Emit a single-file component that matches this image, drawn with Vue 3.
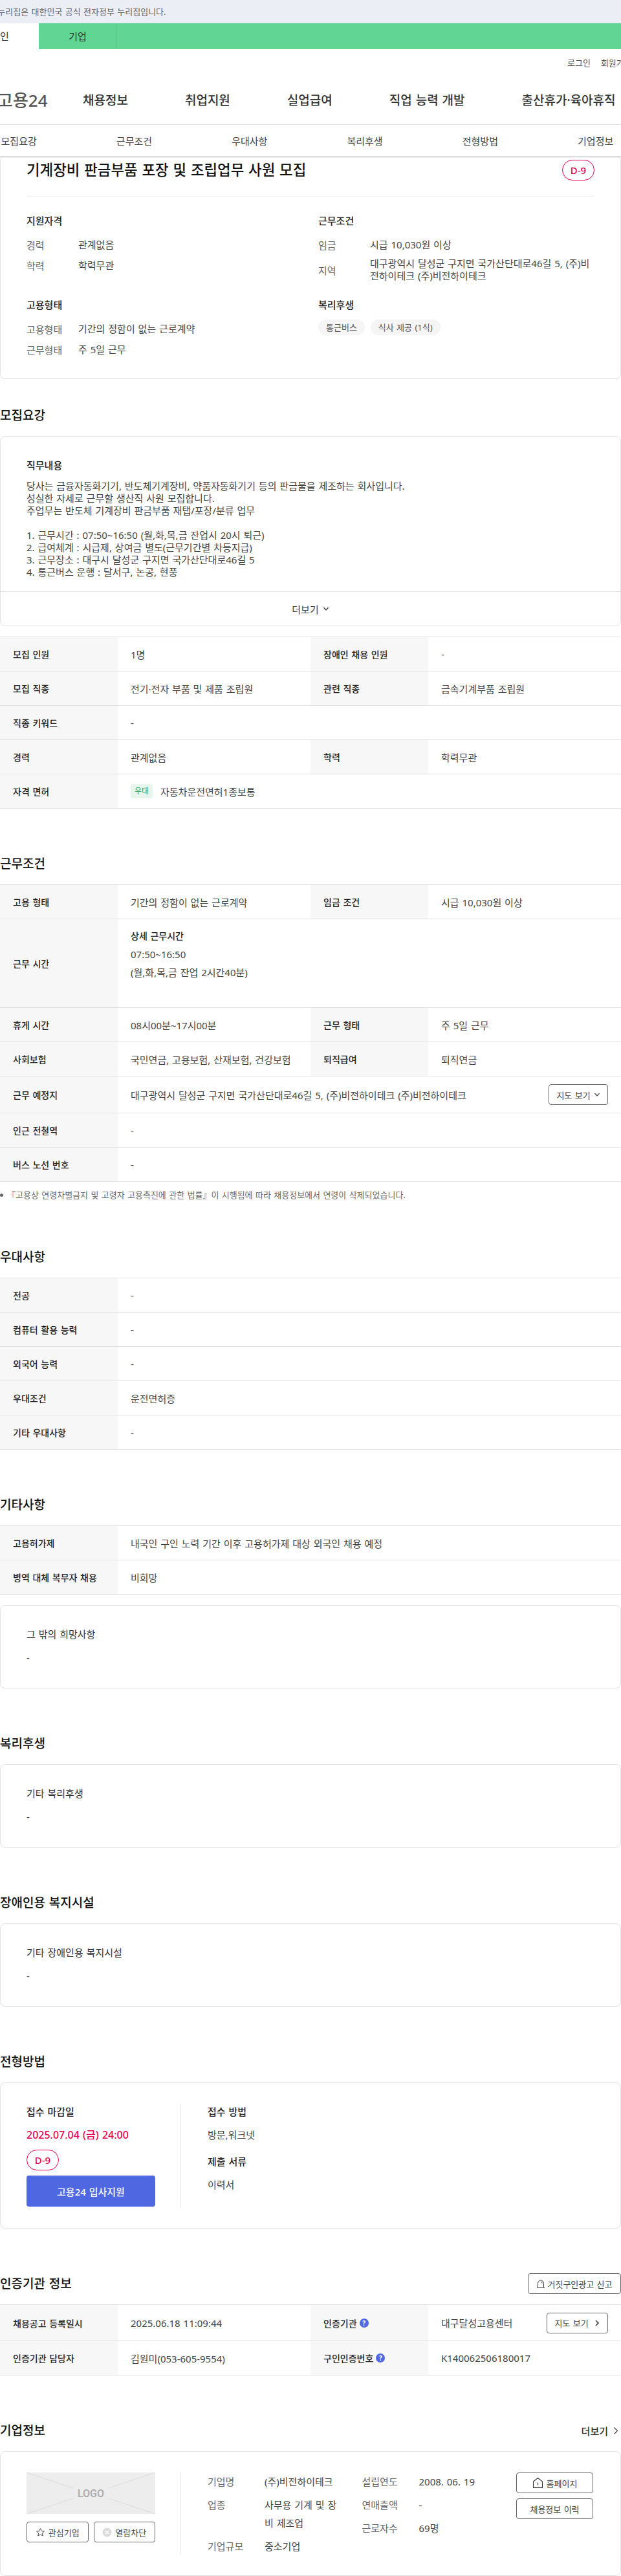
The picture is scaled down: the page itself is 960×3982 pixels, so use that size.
<script setup>
const recruit = [
  [['모집 인원', '1명'], ['장애인 채용 인원', '-']],
  [['모집 직종', '전기·전자 부품 및 제품 조립원'], ['관련 직종', '금속기계부품 조립원']],
  [['직종 키워드', '-']],
  [['경력', '관계없음'], ['학력', '학력무관']],
]
const prefer = [
  ['전공', '-'],
  ['컴퓨터 활용 능력', '-'],
  ['외국어 능력', '-'],
  ['우대조건', '운전면허증'],
  ['기타 우대사항', '-'],
]
const etc = [
  ['고용허가제', '내국인 구인 노력 기간 이후 고용허가제 대상 외국인 채용 예정'],
  ['병역 대체 복무자 채용', '비희망'],
]
const nav = ['채용정보', '취업지원', '실업급여', '직업 능력 개발', '출산휴가·육아휴직']
const anchors = ['모집요강', '근무조건', '우대사항', '복리후생', '전형방법', '기업정보']
</script>

<template>
  <div class="page">
    <div class="topbar">이 누리집은 대한민국 공식 전자정부 누리집입니다.</div>
    <div class="tabs">
      <div class="tab tab-on">개인</div>
      <div class="tab">기업</div>
    </div>
    <div class="util"><span>로그인</span><span>회원가입</span></div>
    <div class="gnb">
      <div class="logo">고용24</div>
      <span v-for="n in nav" :key="n">{{ n }}</span>
    </div>
    <div class="anchors">
      <span v-for="a in anchors" :key="a">{{ a }}</span>
    </div>

    <div class="card summary">
      <div class="sum-head">
        <h1>기계장비 판금부품 포장 및 조립업무 사원 모집</h1>
        <span class="dday">D-9</span>
      </div>
      <div class="sum-grid">
        <div>
          <h4 class="sum-h">지원자격</h4>
          <div class="sum-row"><span class="sum-k">경력</span><span class="sum-v">관계없음</span></div>
          <div class="sum-row"><span class="sum-k">학력</span><span class="sum-v">학력무관</span></div>
        </div>
        <div>
          <h4 class="sum-h">근무조건</h4>
          <div class="sum-row"><span class="sum-k">임금</span><span class="sum-v">시급 10,030원 이상</span></div>
          <div class="sum-row"><span class="sum-k">지역</span><span class="sum-v">대구광역시 달성군 구지면 국가산단대로46길 5, (주)비전하이테크 (주)비전하이테크</span></div>
        </div>
        <div>
          <h4 class="sum-h">고용형태</h4>
          <div class="sum-row"><span class="sum-k">고용형태</span><span class="sum-v">기간의 정함이 없는 근로계약</span></div>
          <div class="sum-row"><span class="sum-k">근무형태</span><span class="sum-v">주 5일 근무</span></div>
        </div>
        <div>
          <h4 class="sum-h chips-h">복리후생</h4>
          <div class="chips"><span>통근버스</span><span>식사 제공 (1식)</span></div>
        </div>
      </div>
    </div>

    <section class="first">
      <h2>모집요강</h2>
      <div class="card job">
        <div class="job-body">
          <h4>직무내용</h4>
          <p>당사는 금융자동화기기, 반도체기계장비, 약품자동화기기 등의 판금물을 제조하는 회사입니다.<br>성실한 자세로 근무할 생산직 사원 모집합니다.<br>주업무는 반도체 기계장비 판금부품 재탭/포장/분류 업무<br><br>1. 근무시간 : 07:50~16:50 (월,화,목,금 잔업시 20시 퇴근)<br>2. 급여체계 : 시급제, 상여금 별도(근무기간별 차등지급)<br>3. 근무장소 : 대구시 달성군 구지면 국가산단대로46길 5<br>4. 통근버스 운행 : 달서구, 논공, 현풍</p>
        </div>
        <div class="more">더보기
          <svg width="10" height="10" viewBox="0 0 10 10"><path d="M1.5 3.2 5 6.8l3.5-3.6" fill="none" stroke="#333" stroke-width="1.4"/></svg>
        </div>
      </div>
      <div class="tbl tbl-gap">
        <div v-for="(r, i) in recruit" :key="i" class="row">
          <template v-for="c in r" :key="c[0]">
            <div class="th">{{ c[0] }}</div>
            <div class="td" :class="{ wide: r.length === 1 }">{{ c[1] }}</div>
          </template>
        </div>
        <div class="row">
          <div class="th">자격 면허</div>
          <div class="td wide"><span class="tag">우대</span>자동차운전면허1종보통</div>
        </div>
      </div>
    </section>

    <section>
      <h2>근무조건</h2>
      <div class="tbl">
        <div class="row">
          <div class="th">고용 형태</div><div class="td">기간의 정함이 없는 근로계약</div>
          <div class="th">임금 조건</div><div class="td">시급 10,030원 이상</div>
        </div>
        <div class="row row-hours">
          <div class="th">근무 시간</div>
          <div class="td wide hours">
            <strong>상세 근무시간</strong>
            <span>07:50~16:50</span>
            <span>(월,화,목,금 잔업 2시간40분)</span>
          </div>
        </div>
        <div class="row">
          <div class="th">휴게 시간</div><div class="td">08시00분~17시00분</div>
          <div class="th">근무 형태</div><div class="td">주 5일 근무</div>
        </div>
        <div class="row">
          <div class="th">사회보험</div><div class="td">국민연금, 고용보험, 산재보험, 건강보험</div>
          <div class="th">퇴직급여</div><div class="td">퇴직연금</div>
        </div>
        <div class="row row-tall">
          <div class="th">근무 예정지</div>
          <div class="td wide between">
            <span>대구광역시 달성군 구지면 국가산단대로46길 5, (주)비전하이테크 (주)비전하이테크</span>
            <button class="btn map">지도 보기
              <svg width="10" height="10" viewBox="0 0 10 10"><path d="M1.5 3.2 5 6.8l3.5-3.6" fill="none" stroke="#333" stroke-width="1.2"/></svg>
            </button>
          </div>
        </div>
        <div class="row"><div class="th">인근 전철역</div><div class="td wide">-</div></div>
        <div class="row"><div class="th">버스 노선 번호</div><div class="td wide">-</div></div>
      </div>
      <p class="note"><i></i>『고용상 연령차별금지 및 고령자 고용촉진에 관한 법률』이 시행됨에 따라 채용정보에서 연령이 삭제되었습니다.</p>
    </section>

    <section class="after-note">
      <h2>우대사항</h2>
      <div class="tbl">
        <div v-for="r in prefer" :key="r[0]" class="row">
          <div class="th">{{ r[0] }}</div><div class="td wide">{{ r[1] }}</div>
        </div>
      </div>
    </section>

    <section>
      <h2>기타사항</h2>
      <div class="tbl">
        <div v-for="r in etc" :key="r[0]" class="row">
          <div class="th">{{ r[0] }}</div><div class="td wide">{{ r[1] }}</div>
        </div>
      </div>
      <div class="card simple tbl-gap">
        <h4>그 밖의 희망사항</h4>
        <p>-</p>
      </div>
    </section>

    <section>
      <h2>복리후생</h2>
      <div class="card simple">
        <h4>기타 복리후생</h4>
        <p>-</p>
      </div>
    </section>

    <section>
      <h2>장애인용 복지시설</h2>
      <div class="card simple">
        <h4>기타 장애인용 복지시설</h4>
        <p>-</p>
      </div>
    </section>

    <section>
      <h2>전형방법</h2>
      <div class="card apply">
        <div class="apply-left">
          <h4>접수 마감일</h4>
          <div class="deadline">2025.07.04 (금) 24:00</div>
          <span class="dday">D-9</span>
          <button class="apply-btn">고용24 입사지원</button>
        </div>
        <div class="apply-right">
          <h4>접수 방법</h4>
          <p>방문,워크넷</p>
          <h4 class="second">제출 서류</h4>
          <p>이력서</p>
        </div>
      </div>
    </section>

    <section>
      <div class="head-row">
        <h2>인증기관 정보</h2>
        <button class="btn report">
          <svg width="14" height="14" viewBox="0 0 14 14"><path d="M2.5 13V6.5a4.5 4.5 0 0 1 9 0V13M1 13h12M7 4.2a2.4 2.4 0 0 1 2.2 2.2" fill="none" stroke="#333" stroke-width="1"/></svg>
          거짓구인광고 신고
        </button>
      </div>
      <div class="tbl">
        <div class="row row-cert">
          <div class="th">채용공고 등록일시</div><div class="td">2025.06.18 11:09:44</div>
          <div class="th">인증기관<span class="help">?</span></div>
          <div class="td between">
            <span>대구달성고용센터</span>
            <button class="btn map2">지도 보기
              <svg width="10" height="12" viewBox="0 0 10 12"><path d="M3 2l4 4-4 4" fill="none" stroke="#333" stroke-width="1.6"/></svg>
            </button>
          </div>
        </div>
        <div class="row">
          <div class="th">인증기관 담당자</div><div class="td">김원미(053-605-9554)</div>
          <div class="th">구인인증번호<span class="help">?</span></div><div class="td">K140062506180017</div>
        </div>
      </div>
    </section>

    <section>
      <div class="head-row">
        <h2>기업정보</h2>
        <span class="more-link">더보기
          <svg width="8" height="13" viewBox="0 0 8 13"><path d="M1.5 1.5l5 5-5 5" fill="none" stroke="#444" stroke-width="1.2"/></svg>
        </span>
      </div>
      <div class="card company">
        <div class="co-left">
          <svg class="co-logo" width="199" height="64" viewBox="0 0 199 64">
            <rect width="199" height="64" fill="#ededed"/>
            <path d="M0 0 72 24M199 0 127 24M0 64 72 40M199 64 127 40" stroke="#dcdcdc" stroke-width="1"/>
            <text x="99.5" y="38" text-anchor="middle" class="logo-text">LOGO</text>
          </svg>
          <div class="co-btns">
            <button class="btn co-btn">
              <svg width="15" height="15" viewBox="0 0 15 15"><path d="M7.5 1.5 9.3 5.4l4.2.5-3.1 2.9.8 4.2-3.7-2.1L3.8 13l.8-4.2L1.5 5.9l4.2-.5z" fill="none" stroke="#444" stroke-width="1"/></svg>
              관심기업
            </button>
            <button class="btn co-btn">
              <svg width="15" height="15" viewBox="0 0 15 15"><circle cx="7.5" cy="7.5" r="7" fill="#dcdcdc"/><path d="M5 5l5 5M10 5l-5 5" stroke="#fff" stroke-width="1.3"/></svg>
              열람차단
            </button>
          </div>
        </div>
        <div class="co-info">
          <dl class="co-col">
            <div><dt>기업명</dt><dd>(주)비전하이테크</dd></div>
            <div><dt>업종</dt><dd>사무용 기계 및 장비 제조업</dd></div>
            <div><dt>기업규모</dt><dd>중소기업</dd></div>
          </dl>
          <dl class="co-col">
            <div><dt>설립연도</dt><dd>2008. 06. 19</dd></div>
            <div><dt>연매출액</dt><dd>-</dd></div>
            <div><dt>근로자수</dt><dd>69명</dd></div>
          </dl>
          <div class="co-actions">
            <button class="btn">
              <svg width="17" height="18" viewBox="0 0 17 18"><path d="M1.5 16.5V7l7-5.5 7 5.5v9.5z" fill="none" stroke="#333" stroke-width="1.1" stroke-linejoin="round"/><path d="M8.5 8.5v4" stroke="#333" stroke-width="1.3"/></svg>
              홈페이지
            </button>
            <button class="btn">채용정보 이력</button>
          </div>
        </div>
      </div>
    </section>
  </div>
</template>

<style scoped>
.page {
  width: 960px;
  height: 3982px;
  overflow: hidden;
  background: #fff;
  color: #444;
  font-family: "Noto Sans", "Noto Sans CJK KR", sans-serif;
  font-size: 15px;
  word-spacing: 1px;
}
h1, h2, h4, p, dl, dd { margin: 0; }
button { font-family: inherit; word-spacing: inherit; cursor: pointer; }

.topbar {
  height: 36px;
  line-height: 36px;
  margin-left: -20px;
  background: #ebeff5;
  font-size: 13px;
  color: #666;
  white-space: nowrap;
}
.tabs {
  display: flex;
  height: 40px;
  margin-left: -60px;
  background: #61d593;
}
.tab {
  width: 120px;
  line-height: 40px;
  text-align: center;
  font-size: 15px;
  color: #333;
  border-right: 1px solid rgba(0, 0, 0, 0.06);
}
.tab-on { background: #fff; border-right: 0; }
.util {
  display: flex;
  gap: 16px;
  height: 40px;
  align-items: center;
  padding-left: 877px;
  font-size: 13px;
  color: #555;
  white-space: nowrap;
}
.gnb {
  display: flex;
  align-items: center;
  gap: 88px;
  height: 76px;
  margin-left: -4px;
  border-bottom: 1px solid #eee;
  font-size: 19px;
  font-weight: 500;
  color: #333;
  white-space: nowrap;
}
.logo {
  width: 44px;
  font-size: 26px;
  color: #555;
}
.anchors {
  position: relative;
  z-index: 1;
  display: flex;
  height: 48px;
  align-items: center;
  margin-left: -60px;
  width: 1080px;
  background: #fff;
  box-shadow: 0 1px 3px rgba(0, 0, 0, 0.25);
  font-size: 15px;
  color: #444;
}
.anchors span { width: 178.3px; text-align: center; flex: none; }

.card {
  border: 1px solid #e2e2e2;
  border-radius: 8px;
  background: #fff;
}
.summary {
  height: 345px;
  padding: 0 40px;
  box-sizing: border-box;
  border-top: 0;
}
.sum-head {
  display: flex;
  justify-content: space-between;
  align-items: flex-start;
  padding: 6px 0 24px;
  border-bottom: 1px solid #eee;
}
h1 {
  font-size: 22.4px;
  line-height: 32px;
  font-weight: 500;
  color: #111;
}
.dday {
  display: block;
  width: 50px;
  height: 32px;
  line-height: 30px;
  box-sizing: border-box;
  border: 1px solid #e5004f;
  border-radius: 16px;
  text-align: center;
  font-size: 15px;
  font-weight: 500;
  color: #e5004f;
}
.sum-grid {
  display: grid;
  grid-template-columns: 451px 1fr;
  grid-template-rows: 107px auto;
  row-gap: 23px;
  padding-top: 25px;
}
h4 {
  font-size: 15px;
  line-height: 24px;
  font-weight: 500;
  color: #222;
}
.sum-h { margin-bottom: 13px; }
.chips-h { margin-bottom: 11px; }
.sum-row { display: flex; align-items: center; min-height: 24px; margin-bottom: 8px; }
.sum-k { width: 80px; flex: none; color: #666; }
.sum-v { line-height: 19px; color: #444; word-break: break-all; }
.chips { display: flex; gap: 9px; }
.chips span {
  height: 24px;
  line-height: 24px;
  padding: 0 12px;
  border-radius: 12px;
  background: #f5f5f5;
  font-size: 13px;
  color: #555;
}

section { padding-top: 71px; }
section.first { padding-top: 42px; }
section.after-note { padding-top: 72px; }
h2 {
  font-size: 19px;
  line-height: 28px;
  font-weight: 500;
  color: #111;
  margin-bottom: 18px;
}
.job-body { padding: 32px 40px 20px; }
.job-body h4 { margin-bottom: 11px; }
.job-body p { line-height: 19px; color: #444; white-space: nowrap; }
.more {
  height: 52px;
  display: flex;
  align-items: center;
  justify-content: center;
  gap: 6px;
  border-top: 1px solid #e2e2e2;
  color: #444;
}
.tbl { border-top: 1px solid #e2e2e2; }
.tbl-gap { margin-top: 16px; }
.row {
  display: flex;
  min-height: 52px;
  border-bottom: 1px solid #e2e2e2;
}
.th {
  width: 182px;
  flex: none;
  box-sizing: border-box;
  padding: 0 20px;
  display: flex;
  align-items: center;
  background: #f7f7f7;
  font-size: 14px;
  font-weight: 500;
  color: #222;
}
.td {
  width: 298px;
  flex: none;
  box-sizing: border-box;
  padding: 0 20px;
  display: flex;
  align-items: center;
  color: #444;
}
.td.wide { width: 778px; }
.between { justify-content: space-between; }
.tag {
  width: 34px;
  height: 22px;
  line-height: 22px;
  margin-right: 12px;
  border-radius: 3px;
  background: #e6f6ec;
  text-align: center;
  font-size: 12px;
  color: #2fa35c;
}
.row-hours { min-height: 136px; }
.hours {
  flex-direction: column;
  align-items: flex-start;
  justify-content: flex-start;
  padding-top: 12px;
  line-height: 28px;
}
.hours strong { font-size: 14px; font-weight: 500; color: #222; }
.row-tall { min-height: 56px; }
.row-cert { min-height: 55px; }
.btn {
  display: flex;
  align-items: center;
  justify-content: center;
  gap: 5px;
  height: 32px;
  padding: 0;
  border: 1px solid #666;
  border-radius: 4px;
  background: #fff;
  font-size: 13px;
  color: #444;
}
.map { width: 92px; }
.map2 { width: 95px; gap: 8px; }
.note {
  margin-top: 10px;
  line-height: 20px;
  font-size: 13px;
  color: #666;
  display: flex;
  align-items: center;
  white-space: nowrap;
}
.note i {
  width: 5px;
  height: 5px;
  margin-right: 6px;
  border-radius: 50%;
  background: #666;
}
.simple {
  height: 129px;
  box-sizing: border-box;
  padding: 32px 40px 0;
}
.simple h4 { font-weight: 400; color: #333; margin-bottom: 12px; }
.simple p { line-height: 24px; color: #444; }
.apply {
  display: flex;
  height: 226px;
  box-sizing: border-box;
  padding: 32px 40px;
}
.apply-left {
  width: 239px;
  height: 160px;
  flex: none;
  box-sizing: border-box;
  border-right: 1px solid #e8e8e8;
}
.apply-left .dday { margin-top: 11px; }
.deadline {
  margin-top: 12px;
  line-height: 24px;
  font-size: 16px;
  font-weight: 500;
  color: #e5004f;
}
.apply-btn {
  display: block;
  width: 199px;
  height: 48px;
  margin-top: 8px;
  border: 0;
  border-radius: 4px;
  background: #4f67e1;
  font-size: 15px;
  font-weight: 500;
  color: #fff;
}
.apply-right { padding-left: 41px; }
.apply-right p { margin-top: 12px; line-height: 24px; color: #444; }
.apply-right .second { margin-top: 17px; }
.head-row {
  display: flex;
  justify-content: space-between;
  align-items: center;
  height: 28px;
  margin-bottom: 18px;
}
.head-row h2 { margin: 0; }
.report { width: 144px; flex: none; gap: 3px; }
.help {
  width: 14px;
  height: 14px;
  line-height: 14px;
  margin-left: 4px;
  border-radius: 50%;
  background: #4f67e1;
  text-align: center;
  font-size: 10px;
  font-weight: 700;
  color: #fff;
}
.more-link {
  display: flex;
  align-items: center;
  gap: 8px;
  padding-right: 4px;
  font-size: 15px;
  font-weight: 500;
  color: #333;
}
.company {
  display: flex;
  height: 193px;
  box-sizing: border-box;
  padding: 32px 40px;
}
.co-left {
  width: 239px;
  height: 127px;
  flex: none;
  box-sizing: border-box;
  border-right: 1px solid #e8e8e8;
}
.co-logo { display: block; }
.logo-text {
  font-family: Roboto, sans-serif;
  font-size: 16px;
  font-weight: 500;
  fill: #aaa;
}
.co-btns { display: flex; gap: 8px; width: 199px; margin-top: 12px; }
.co-btn { flex: 1; }
.co-info { display: flex; flex: 1; padding-left: 41px; }
.co-col { width: 238.5px; flex: none; }
.co-col > div { display: flex; margin-bottom: 8px; line-height: 28px; }
.co-col dt { width: 88px; flex: none; color: #666; }
.co-col dd { width: 119px; color: #444; word-break: break-all; }
.co-actions { display: flex; flex-direction: column; gap: 8px; width: 119px; flex: none; }
</style>
